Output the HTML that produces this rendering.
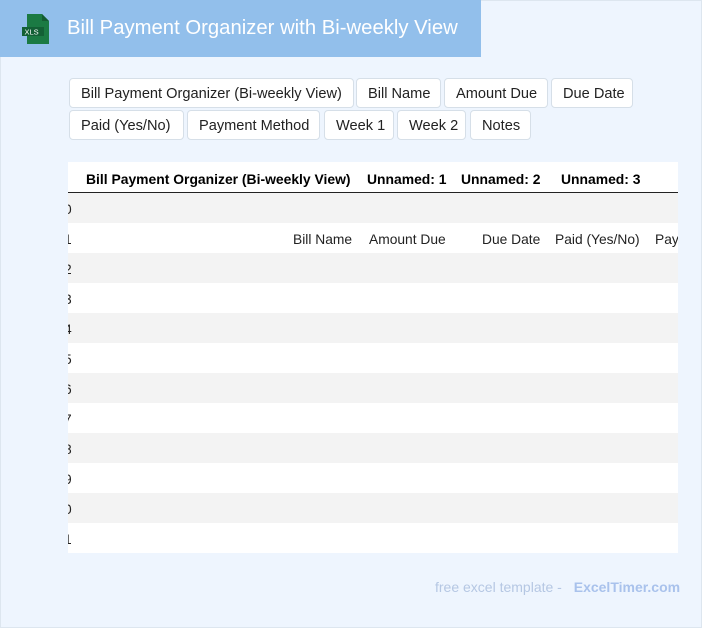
<!DOCTYPE html>
<html><head><style>
*{box-sizing:border-box;margin:0;padding:0}
body{width:702px;height:628px;background:#eef5fe;font-family:"Liberation Sans",sans-serif;position:relative;overflow:hidden;box-shadow:inset 0 0 0 1px #dde6ef}
.hdr{position:absolute;left:0;top:0;width:481px;height:57px;background:#92bfeb}
.hdr .t{position:absolute;left:67px;top:17px;color:#fff;font-size:20.3px}
.btn{position:absolute;height:30px;background:#fff;border:1px solid #d6dfe8;border-radius:4px;font-size:14.6px;color:#222;line-height:30px;padding-left:11px;white-space:nowrap}
.tbl{position:absolute;left:68px;top:162px;width:610px;height:391px;overflow:hidden;background:#fff}
.th{position:absolute;top:0;height:31px;border-bottom:1px solid #222;width:610px;font-weight:bold;font-size:13.9px}
.th span,.r span{position:absolute;top:9px;white-space:nowrap}
.r{position:absolute;left:0;width:610px;height:30px;font-size:13.8px;color:#222}
.g{background:#f3f3f3}
.foot{position:absolute;top:579px;left:435px;font-size:14px;color:#b5c7e3}
.foot b{color:#a9c2ec;margin-left:8px}
</style></head><body>
<div class="hdr">
<svg style="position:absolute;left:21px;top:13px" width="30" height="32" viewBox="0 0 30 32"><path d="M6 1h15l7 7v23H6z" fill="#1b7a43"/><path d="M21 1v7h7" fill="#145c32"/><rect x="1" y="14" width="22" height="9" fill="#136035"/><text x="3.5" y="21.5" font-size="7.5" fill="#fff" font-family="Liberation Sans">XLS</text></svg>
<div class="t">Bill Payment Organizer with Bi-weekly View</div></div>
<div class="btn" style="left:69px;top:78px;width:285px">Bill Payment Organizer (Bi-weekly View)</div>
<div class="btn" style="left:356px;top:78px;width:85px">Bill Name</div>
<div class="btn" style="left:444px;top:78px;width:104px">Amount Due</div>
<div class="btn" style="left:551px;top:78px;width:82px">Due Date</div>
<div class="btn" style="left:69px;top:110px;width:115px">Paid (Yes/No)</div>
<div class="btn" style="left:187px;top:110px;width:133px">Payment Method</div>
<div class="btn" style="left:324px;top:110px;width:70px">Week 1</div>
<div class="btn" style="left:397px;top:110px;width:69px">Week 2</div>
<div class="btn" style="left:470px;top:110px;width:61px">Notes</div>
<div class="tbl">
<div class="th"><span style="left:18px">Bill Payment Organizer (Bi-weekly View)</span><span style="left:299px">Unnamed: 1</span><span style="left:393px">Unnamed: 2</span><span style="left:493px">Unnamed: 3</span></div>
<div class="r g" style="top:31px"><span style="left:-4px">0</span></div>
<div class="r" style="top:61px"><span style="left:-4px">1</span><span style="left:225px">Bill Name</span><span style="left:301px">Amount Due</span><span style="left:414px">Due Date</span><span style="left:487px">Paid (Yes/No)</span><span style="left:587px">Payment</span></div>
<div class="r g" style="top:91px"><span style="left:-4px">2</span></div>
<div class="r" style="top:121px"><span style="left:-4px">3</span></div>
<div class="r g" style="top:151px"><span style="left:-4px">4</span></div>
<div class="r" style="top:181px"><span style="left:-4px">5</span></div>
<div class="r g" style="top:211px"><span style="left:-4px">6</span></div>
<div class="r" style="top:241px"><span style="left:-4px">7</span></div>
<div class="r g" style="top:271px"><span style="left:-4px">8</span></div>
<div class="r" style="top:301px"><span style="left:-4px">9</span></div>
<div class="r g" style="top:331px"><span style="left:-4px">0</span></div>
<div class="r" style="top:361px"><span style="left:-4px">1</span></div>
</div>
<div class="foot">free excel template - <b>ExcelTimer.com</b></div>
</body></html>
